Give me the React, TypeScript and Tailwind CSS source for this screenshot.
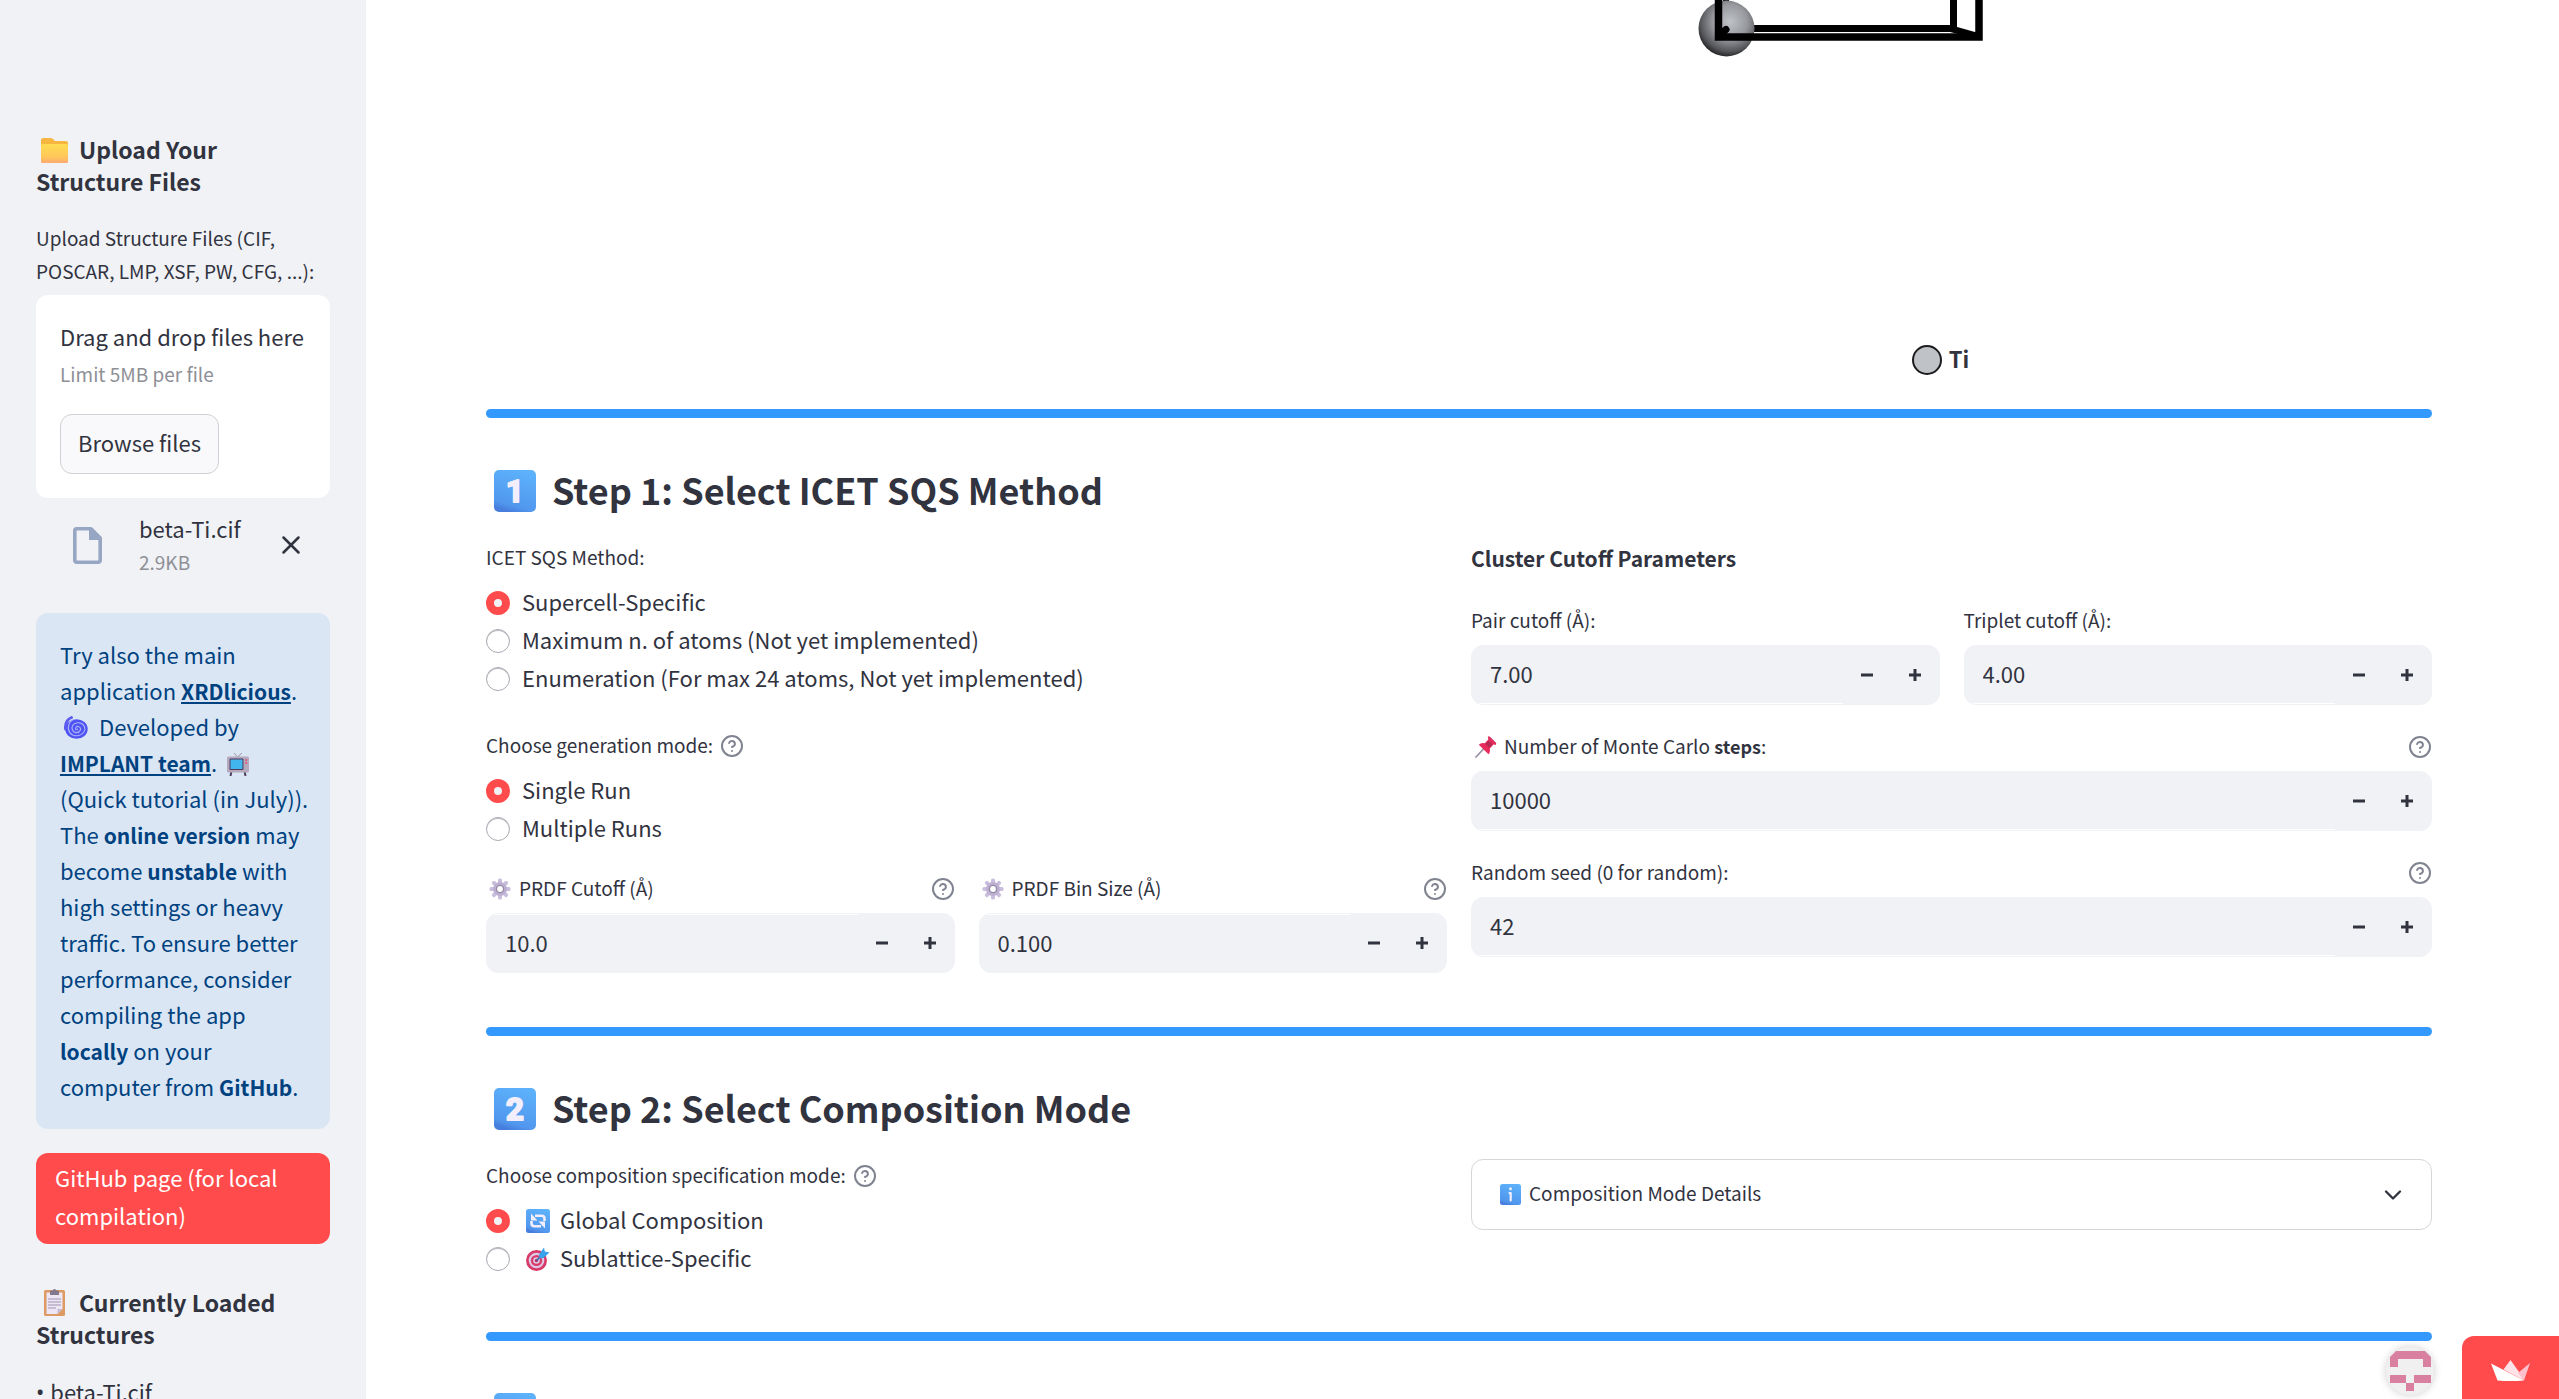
import { useId, useState, type ReactNode } from "react";
import { ChevronDown, CircleHelp, X } from "lucide-react";

/* ---------- pictograms ---------- */

function FolderIcon() {
  return (
    <svg viewBox="0 0 27 25" className="ml-[5px] mr-[11px] inline-block h-[25px] w-[27px] align-[-4px]" aria-hidden="true">
      <defs>
        <linearGradient id="folder" x1="0" y1="0" x2="0" y2="1">
          <stop offset="0" stopColor="#ffdd52" />
          <stop offset="0.7" stopColor="#ffc65a" />
          <stop offset="1" stopColor="#ffa873" />
        </linearGradient>
      </defs>
      <path d="M0 2Q0 0 2 0H9.500Q11 0 12 1L14 3H25Q27 3 27 5V12H0Z" fill="#f6b63f" />
      <rect x="0" y="6" width="27" height="19" rx="1.500" fill="url(#folder)" />
    </svg>
  );
}

function ClipboardIcon() {
  return (
    <svg viewBox="0 0 21 27" className="ml-2 mr-[14px] inline-block h-[27px] w-[21px] align-[-4px]" aria-hidden="true">
      <rect y="1" width="21" height="26" rx="1.500" fill="#dd9a63" />
      <path d="M2.500 3.500H18.500V20L13.500 25H2.500Z" fill="#ece6f5" />
      <path d="M13.500 25V20H18.500Z" fill="#c4bad2" />
      <path d="M6 2.500Q6 1.500 7.500 1.500H8.500Q9 0 10.500 0T12.500 1.500H13.500Q15 1.500 15 2.500V6H6Z" fill="#84798c" />
      <path d="M4 10H17M4 13H17M4 16H17M4 19H12" stroke="#b9b0c6" strokeWidth="1.300" />
    </svg>
  );
}

function CycloneIcon() {
  return (
    <svg viewBox="0 0 24 24" className="ml-1 mr-[11px] inline-block size-6 align-[-4px]" aria-hidden="true">
      <ellipse cx="12.500" cy="13" rx="11.200" ry="9.800" fill="#5053f4" />
      <path d="M7.500 1.500C2.500 3.500 1 8 1.500 13" fill="none" stroke="#5b5cf0" strokeWidth="2.800" strokeLinecap="round" />
      <path
        d="M9.500 3.500C4 6 3 13 6 16.800S16 21 19.500 16.500S19 6.500 14 6.800S7 10.500 8.500 14S15 17.500 16.300 14.300S13.500 9.300 12 11.500S13 14.500 13.500 13"
        fill="none"
        stroke="#a9b4fb"
        strokeWidth="1.100"
        strokeLinecap="round"
      />
    </svg>
  );
}

function TelevisionIcon() {
  return (
    <svg viewBox="0 0 22 23" className="ml-[5px] inline-block h-[23px] w-[22px] align-[-4px]" aria-hidden="true">
      <path d="M7 0L10.500 4L15 0" fill="none" stroke="#9b93a3" strokeWidth="1" />
      <path d="M4.500 18L3.500 23M17.500 18L18.500 23" stroke="#4f3f5c" strokeWidth="2" />
      <rect y="3.500" width="22" height="16" rx="1.500" fill="#b5a9be" />
      <rect x="2.500" y="5.500" width="14" height="11.500" rx="1" fill="#4d3b5e" />
      <rect x="3.500" y="6.500" width="12" height="9.500" fill="#41b5ee" />
      <circle cx="19.200" cy="7" r="1" fill="#eb4b70" />
      <circle cx="19.200" cy="10" r="1" fill="#eb4b70" />
    </svg>
  );
}

function GearIcon() {
  return (
    <svg viewBox="0 0 22 22" className="ml-[3px] mr-2 size-[22px] shrink-0" aria-hidden="true">
      <g fill="#c9bedd">
        <rect x="9" y="0.500" width="4" height="21" rx="1.500" />
        <rect x="9" y="0.500" width="4" height="21" rx="1.500" transform="rotate(45 11 11)" />
        <rect x="9" y="0.500" width="4" height="21" rx="1.500" transform="rotate(90 11 11)" />
        <rect x="9" y="0.500" width="4" height="21" rx="1.500" transform="rotate(135 11 11)" />
      </g>
      <circle cx="11" cy="11" r="7" fill="#bdb0d2" />
      <circle cx="11" cy="11" r="4.300" fill="#978aa6" />
      <circle cx="11" cy="11" r="2.900" fill="#fff" />
    </svg>
  );
}

function PinIcon() {
  return (
    <svg viewBox="0 0 22 22" className="ml-1 mr-[7px] size-[22px] shrink-0" aria-hidden="true">
      <path d="M8.500 13L1 21" stroke="#9c93a6" strokeWidth="1.800" strokeLinecap="round" />
      <path d="M13 .8Q14 .2 15 1L21 7Q21.500 8 20.500 8.800L18.500 8.500L14.800 12.500Q15.500 16.500 13.500 18.200L3.800 8.800Q6 6.500 9.800 7.300L13.500 3.300Z" fill="#e92a5c" />
      <path d="M13 .8Q14 .2 15 1L21 7Q21.500 8 20.500 8.800L13.500 3.300Z" fill="#dc2f5f" />
      <path d="M10.500 7.800L14.200 11.800L17.500 8.500L13.800 4.800Z" fill="#b32a52" />
    </svg>
  );
}

function TileGradient({ id }: { id: string }) {
  return (
    <defs>
      <linearGradient id={id} x1="0.700" y1="0" x2="0.400" y2="1">
        <stop offset="0" stopColor="#5db2fb" />
        <stop offset="0.850" stopColor="#5197ee" />
        <stop offset="1" stopColor="#477ddd" />
      </linearGradient>
    </defs>
  );
}

function Keycap({ digit }: { digit: string }) {
  const id = useId();
  return (
    <svg viewBox="0 0 42 42" className="ml-2 mr-4 size-[42px] shrink-0" role="img" aria-label={digit}>
      <TileGradient id={id} />
      <rect width="42" height="42" rx="5" fill={`url(#${id})`} />
      <text
        x="21"
        y="32"
        textAnchor="middle"
        fontSize="31"
        fill="#f3eefc"
        stroke="#f3eefc"
        strokeWidth="2"
        strokeLinejoin="round"
        className="font-[Roboto,sans-serif] font-bold"
      >
        {digit}
      </text>
    </svg>
  );
}

function CycleTile() {
  return (
    <svg viewBox="0 0 24 24" className="ml-1 mr-[10px] size-6 shrink-0" aria-hidden="true">
      <TileGradient id="cycle" />
      <rect width="24" height="24" rx="2.500" fill="url(#cycle)" />
      <g fill="none" stroke="#f3eefc" strokeWidth="2.600">
        <path d="M18.500 12V9.500Q18.500 6.800 15.500 6.800H9" />
        <path d="M5.500 12V14.500Q5.500 17.200 8.500 17.200H15" />
      </g>
      <path d="M5 4.500V11.500H11.500Z" fill="#f3eefc" />
      <path d="M19 19.500V12.500H12.500Z" fill="#f3eefc" />
    </svg>
  );
}

function TargetIcon() {
  return (
    <svg viewBox="0 0 24 24" className="ml-1 mr-[10px] size-6 shrink-0" aria-hidden="true">
      <circle cx="10.500" cy="13.500" r="10.500" fill="#d93a6a" />
      <circle cx="10.500" cy="13.500" r="7.800" fill="#dcc9e4" />
      <circle cx="10.500" cy="13.500" r="5.600" fill="#d93a6a" />
      <circle cx="10.500" cy="13.500" r="3.300" fill="#dcc9e4" />
      <circle cx="10.500" cy="13.500" r="1.700" fill="#c22c58" />
      <path d="M10.500 13.500L19 5" stroke="#2f6fb5" strokeWidth="1.600" />
      <path d="M13 7.500L18 .5L18.800 4.500L23.500 5.500L17.500 11L13.500 11.500Z" fill="#37a2ea" />
    </svg>
  );
}

function InfoTile() {
  return (
    <svg viewBox="0 0 21 21" className="mr-2 size-[21px] shrink-0" aria-hidden="true">
      <TileGradient id="info" />
      <rect width="21" height="21" rx="2.500" fill="url(#info)" />
      <circle cx="10.500" cy="4.700" r="1.500" fill="#f3eefc" />
      <path d="M9.500 9H10.700V16.500" fill="none" stroke="#f3eefc" strokeWidth="2.200" strokeLinecap="round" strokeLinejoin="round" />
    </svg>
  );
}

function FileIcon() {
  return (
    <svg viewBox="0 0 29 37" className="h-[37px] w-[29px] shrink-0" aria-hidden="true">
      <path d="M3.500 1.800H18L27.200 11V33Q27.200 35.200 25 35.200H4Q1.800 35.200 1.800 33V4Q1.800 1.800 3.500 1.800Z" fill="none" stroke="#97a6c3" strokeWidth="3.600" strokeLinejoin="round" />
      <path d="M16 1H18.500L28 10.500V13H16Z" fill="#97a6c3" />
    </svg>
  );
}

function CrownIcon() {
  return (
    <svg viewBox="0 0 39 21" className="h-[21px] w-[39px]" aria-hidden="true">
      <path d="M19.500 0L12.500 9.500L33 20.500L28 12Z" fill="#ffe1e8" />
      <path d="M39 3L27 13L33 20.500Z" fill="#ffc0cd" />
      <path d="M0 3.500L33 20.500Q19 21.500 6.500 20.500Z" fill="#fff" />
    </svg>
  );
}

/* Lower end of the unit cell as the 3D viewer renders it */
function UnitCell() {
  return (
    <svg viewBox="0 0 512 64" className="h-16 w-[512px]" role="img" aria-label="Unit cell of beta-Ti">
      <defs>
        <radialGradient id="atom" cx="0.560" cy="0.380" r="0.620">
          <stop offset="0" stopColor="#bfc2c7" />
          <stop offset="0.500" stopColor="#97999e" />
          <stop offset="0.850" stopColor="#55565a" />
          <stop offset="1" stopColor="#2a2a2c" />
        </radialGradient>
      </defs>
      <path d="M30 0V8" stroke="#000" strokeWidth="6" />
      <path d="M40 28.500H257.500V0" fill="none" stroke="#000" strokeWidth="7" />
      <circle cx="30.500" cy="28.500" r="28" fill="url(#atom)" />
      <path d="M254 25L286 34V40L254 32Z" fill="#000" />
      <path d="M22.500 0V37H283V0" fill="none" stroke="#000" strokeWidth="7.500" />
      <path d="M23.500 35L30 29.500" stroke="#000" strokeWidth="7" strokeLinecap="round" />
    </svg>
  );
}

/* ---------- form parts ---------- */

function Help({ about }: { about: string }) {
  return (
    <button type="button" aria-label={`Help: ${about}`} className="shrink-0 text-[#808490]">
      <CircleHelp className="size-6" />
    </button>
  );
}

function RadioGroup({ legend, help, options }: { legend: string; help?: boolean; options: { text: string; icon?: ReactNode }[] }) {
  const name = useId();
  const [picked, setPicked] = useState(0);
  return (
    <div role="radiogroup" aria-label={legend}>
      <div className="mb-[9px] flex h-[34px] items-center gap-[7px] text-[19px]">
        <span className="pb-0.5">{legend}</span>
        {help && <Help about={legend} />}
      </div>
      {options.map((o, i) => (
        <label key={o.text} className="flex h-[38px] items-center">
          <input
            type="radio"
            name={name}
            checked={picked === i}
            onChange={() => setPicked(i)}
            className="mr-3 size-6 shrink-0 appearance-none rounded-full border border-[#a9abb2] bg-white shadow-[inset_0_1px_0_#b9bac0] checked:border-8 checked:border-[#ff4b4b] checked:bg-[#f0f2f6] checked:shadow-none"
          />
          {o.icon}
          <span className="pb-[3px]">{o.text}</span>
        </label>
      ))}
    </div>
  );
}

function NumberField({
  label,
  icon,
  value,
  step,
  digits = 0,
  help,
  edge = "bottom",
  children,
}: {
  label: string;
  icon?: ReactNode;
  value: number;
  step: number;
  digits?: number;
  help?: boolean;
  edge?: "top" | "bottom";
  children?: ReactNode;
}) {
  const id = useId();
  const [text, setText] = useState(value.toFixed(digits));
  const bump = (d: number) => setText((Number(text) + d).toFixed(digits));
  return (
    <div className="min-w-0">
      <div className="mb-[7px] flex h-[34px] items-center justify-between text-[19px]">
        <label htmlFor={id} className="flex items-center">
          {icon}
          <span className="pb-0.5">{children ?? label}</span>
        </label>
        {help && <Help about={label} />}
      </div>
      <div className="flex h-[60px] overflow-hidden rounded-xl border border-[#f0f2f6] bg-[#f0f2f6]">
        <input
          id={id}
          value={text}
          onChange={(e) => setText(e.target.value)}
          className={
            edge === "top"
              ? "min-w-0 flex-1 border-t border-white bg-[#f0f2f6] px-[18px] pb-[3px] outline-none"
              : "min-w-0 flex-1 border-b border-white bg-[#f0f2f6] px-[18px] pb-0.5 outline-none"
          }
        />
        <button type="button" aria-label={`Decrease ${label}`} onClick={() => bump(-step)} className="flex w-12 items-center justify-center">
          <svg viewBox="0 0 12 12" className="size-3" aria-hidden="true">
            <path d="M0 6H12" stroke="#31333f" strokeWidth="3" />
          </svg>
        </button>
        <button type="button" aria-label={`Increase ${label}`} onClick={() => bump(step)} className="flex w-12 items-center justify-center">
          <svg viewBox="0 0 12 12" className="size-3" aria-hidden="true">
            <path d="M0 6H12M6 0V12" stroke="#31333f" strokeWidth="3" />
          </svg>
        </button>
      </div>
    </div>
  );
}

function StepHeading({ digit, children }: { digit: string; children?: ReactNode }) {
  return (
    <h3 className="mt-12 mb-[25px] flex h-[50px] items-center text-4xl font-semibold">
      <Keycap digit={digit} />
      <span className="pb-1">{children}</span>
    </h3>
  );
}

function Strong({ children }: { children: ReactNode }) {
  return <strong className="text-[21px] leading-none font-semibold">{children}</strong>;
}

function Divider() {
  return <hr className="h-[9px] rounded-full border-0 bg-[#3399ff]" />;
}

/* ---------- page ---------- */

function Sidebar() {
  return (
    <aside className="flex w-[366px] shrink-0 flex-col bg-[#f0f2f6] px-9 pt-[133px]">
      <h3 className="pr-6 text-[23px] leading-8 font-semibold">
        <FolderIcon />
        Upload Your Structure Files
      </h3>
      <label htmlFor="upload" className="mt-6 block text-[19px] leading-[33px]">
        Upload Structure Files (CIF, POSCAR, LMP, XSF, PW, CFG, ...):
      </label>
      <section className="mt-2 rounded-xl bg-white px-6 pt-[23px] pb-6">
        <p className="leading-9 whitespace-nowrap">Drag and drop files here</p>
        <p className="text-[19px] leading-10 text-[#8e9096]">Limit 5MB per file</p>
        <button id="upload" type="button" className="mt-5 h-[60px] rounded-xl border border-[#d0d1d5] bg-[#f9f9fb] px-[17px] pb-1">
          Browse files
        </button>
      </section>
      <div className="mt-[13px] flex items-center pl-[37px]">
        <FileIcon />
        <div className="ml-[37px] flex-1 leading-[34px]">
          <p>beta-Ti.cif</p>
          <p className="text-[19px] text-[#8e9096]">2.9KB</p>
        </div>
        <button type="button" aria-label="Remove beta-Ti.cif" className="mr-6">
          <X className="size-[30px]" />
        </button>
      </div>
      <div className="mt-[34px] rounded-xl bg-[#dae6f4] pt-[23px] pr-4 pb-[25px] pl-6 leading-9 text-[#004280]">
        Try also the main application{" "}
        <a href="#xrdlicious" className="text-[21px] leading-none font-semibold underline">
          XRDlicious
        </a>
        . <br />
        <CycloneIcon />
        Developed by{" "}
        <a href="#implant" className="text-[21px] leading-none font-semibold underline">
          IMPLANT team
        </a>
        . <TelevisionIcon /> (Quick tutorial (in July)). The <Strong>online version</Strong> may become <Strong>unstable</Strong> with high settings or heavy
        traffic. To ensure better performance, consider compiling the app <Strong>locally</Strong> on your computer from <Strong>GitHub</Strong>.
      </div>
      <a href="#github" className="mt-6 rounded-xl bg-[#ff4b4b] px-[19px] pt-[5px] pb-[10px] leading-[38px] text-white">
        GitHub page (for local compilation)
      </a>
      <h3 className="mt-[42px] pr-6 text-[23px] leading-8 font-semibold">
        <ClipboardIcon />
        Currently Loaded Structures
      </h3>
      <p className="mt-[22px] flex gap-[6px] leading-[38px]">
        <span className="font-['Noto_Sans',sans-serif]">•</span>
        <span>beta-Ti.cif</span>
      </p>
    </aside>
  );
}

export default function App() {
  return (
    <div className="relative flex h-screen overflow-hidden bg-white font-['Noto_Sans_CJK_SC','Noto_Sans',sans-serif] text-[22px] text-[#31333f]">
      <Sidebar />
      <main className="min-w-0 flex-1 pr-[127px] pl-[120px]">
        <div className="mb-[34px] grid grid-cols-2 gap-6">
          <figure className="col-start-2 flex flex-col items-center">
            <UnitCell />
            <figcaption className="mt-[281px] mr-[22px] flex h-[30px] items-center gap-[7px] font-bold">
              <span className="size-[30px] rounded-full border-2 border-[#1c1c1e] bg-[#bfc2c7]" />
              <span className="pb-[3px]">Ti</span>
            </figcaption>
          </figure>
        </div>

        <Divider />
        <StepHeading digit="1">Step 1: Select ICET SQS Method</StepHeading>
        <div className="mb-[54px] grid grid-cols-2 items-start gap-6">
          <div>
            <RadioGroup
              legend="ICET SQS Method:"
              options={[
                { text: "Supercell-Specific" },
                { text: "Maximum n. of atoms (Not yet implemented)" },
                { text: "Enumeration (For max 24 atoms, Not yet implemented)" },
              ]}
            />
            <div className="mt-[31px]">
              <RadioGroup legend="Choose generation mode:" help options={[{ text: "Single Run" }, { text: "Multiple Runs" }]} />
            </div>
            <div className="mt-6 grid grid-cols-2 gap-6">
              <NumberField label="PRDF Cutoff (Å)" icon={<GearIcon />} value={10} step={1} digits={1} help edge="top" />
              <NumberField label="PRDF Bin Size (Å)" icon={<GearIcon />} value={0.1} step={0.01} digits={3} help edge="top" />
            </div>
          </div>
          <div className="flex flex-col gap-[25px]">
            <p className="pb-1 text-[21px] leading-[34px] font-semibold">Cluster Cutoff Parameters</p>
            <div className="grid grid-cols-2 gap-6">
              <NumberField label="Pair cutoff (Å):" value={7} step={0.1} digits={2} />
              <NumberField label="Triplet cutoff (Å):" value={4} step={0.1} digits={2} />
            </div>
            <NumberField label="Number of Monte Carlo steps:" icon={<PinIcon />} value={10000} step={1000} help>
              Number of Monte Carlo <strong className="text-lg leading-none font-semibold">steps</strong>:
            </NumberField>
            <NumberField label="Random seed (0 for random):" value={42} step={1} help />
          </div>
        </div>

        <Divider />
        <StepHeading digit="2">Step 2: Select Composition Mode</StepHeading>
        <div className="mb-[54px] grid grid-cols-2 items-start gap-6">
          <RadioGroup
            legend="Choose composition specification mode:"
            help
            options={[
              { text: "Global Composition", icon: <CycleTile /> },
              { text: "Sublattice-Specific", icon: <TargetIcon /> },
            ]}
          />
          <button type="button" aria-expanded="false" className="flex h-[71px] items-center rounded-xl border border-[#d6d6d9] pr-6 pl-7 text-[19px]">
            <InfoTile />
            <span className="flex-1 pb-0.5 text-left">Composition Mode Details</span>
            <ChevronDown className="size-7" />
          </button>
        </div>

        <Divider />
        <StepHeading digit="3" />
      </main>

      <div className="absolute right-0 bottom-0 flex h-[63px] items-start">
        <div className="mt-[11px] mr-7 size-12 rounded-full bg-[#f0f0f0] shadow-[0_0_8px_rgba(0,0,0,0.2)]">
          <svg viewBox="0 0 48 48" className="size-12" role="img" aria-label="App creator">
            <path d="M4 20V10L10 4H39L45 10V20H37V12H12V20Z" fill="#d97f9f" />
            <path d="M4 28H20V36H28V28H45V36H28V44H20V36H4Z" fill="#d97f9f" />
          </svg>
        </div>
        <a href="#streamlit" aria-label="Hosted with Streamlit" className="flex h-full w-[97px] justify-center rounded-tl-xl bg-[#ff4b4b] pt-6">
          <CrownIcon />
        </a>
      </div>
    </div>
  );
}
